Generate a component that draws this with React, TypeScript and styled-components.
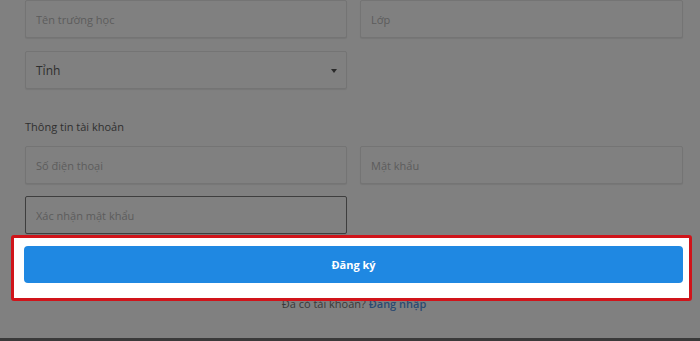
import React from 'react';
import styled, { createGlobalStyle } from 'styled-components';

const GlobalStyle = createGlobalStyle`
  html, body {
    margin: 0;
    padding: 0;
    background: #808080;
    font-family: 'Open Sans', 'Liberation Sans', sans-serif;
  }
  * { box-sizing: border-box; }
`;

const Page = styled.div`
  width: 700px;
  height: 341px;
  overflow: hidden;
  background: #808080;
  border-bottom: 3px solid #3a3a3a;
  padding: 0 17px 0 25px;
`;

const Grid = styled.div<{ $top?: number }>`
  display: grid;
  grid-template-columns: 322px 323px;
  column-gap: 13px;
  margin-top: ${(p) => p.$top ?? 0}px;
`;

const Field = styled.input<{ $focused?: boolean }>`
  display: block;
  width: 100%;
  height: 38px;
  padding: 0 10px;
  border: 1px solid ${(p) => (p.$focused ? '#3e3e3e' : '#747474')};
  border-radius: 2px;
  background: #808080;
  box-shadow: 0 1px 1px rgba(0, 0, 0, 0.08);
  font-family: inherit;
  font-size: 11px;
  color: #333;
  outline: none;

  &::placeholder {
    color: #5c5c5c;
  }
`;

const Select = styled.div`
  position: relative;
  display: flex;
  align-items: center;
  height: 38px;
  padding: 0 10px;
  border: 1px solid #747474;
  border-radius: 2px;
  box-shadow: 0 1px 1px rgba(0, 0, 0, 0.08);
  font-size: 12px;
  color: #2e2e2e;
`;

const Caret = styled.span`
  position: absolute;
  right: 9px;
  top: 17px;
  width: 0;
  height: 0;
  border-left: 3px solid transparent;
  border-right: 3px solid transparent;
  border-top: 4px solid #2a2a2a;
`;

const SectionTitle = styled.div`
  margin-top: 30px;
  height: 16px;
  line-height: 16px;
  font-size: 11px;
  color: #2f2f2f;
`;

const Highlight = styled.div`
  position: relative;
  z-index: 1;
  width: 681px;
  margin: 1px 0 0 -14px;
  padding: 8px 6px 15px 10px;
  border: 3px solid #d0141a;
  border-radius: 3px;
  background: #fff;
`;

const SubmitButton = styled.button`
  display: block;
  width: 100%;
  height: 37px;
  border: none;
  border-radius: 4px;
  background: #1f88e2;
  color: #fff;
  font-family: inherit;
  font-size: 11px;
  font-weight: 700;
  cursor: pointer;
`;

const Footer = styled.div`
  margin-top: -5px;
  text-align: center;
  font-size: 11px;
  line-height: 16px;
  color: #383838;

  a {
    color: #2b4a70;
    font-weight: 600;
    text-decoration: none;
  }
`;

export default function App() {
  return (
    <>
      <GlobalStyle />
      <Page>
        <Grid>
          <Field placeholder="Tên trường học" />
          <Field placeholder="Lớp" />
        </Grid>
        <Grid $top={13}>
          <Select>
            Tỉnh
            <Caret />
          </Select>
        </Grid>
        <SectionTitle>Thông tin tài khoản</SectionTitle>
        <Grid $top={11}>
          <Field placeholder="Số điện thoại" />
          <Field placeholder="Mật khẩu" type="password" />
        </Grid>
        <Grid $top={12}>
          <Field placeholder="Xác nhận mật khẩu" type="password" $focused />
        </Grid>
        <Highlight>
          <SubmitButton>Đăng ký</SubmitButton>
        </Highlight>
        <Footer>
          Đã có tài khoản? <a href="#">Đăng nhập</a>
        </Footer>
      </Page>
    </>
  );
}
